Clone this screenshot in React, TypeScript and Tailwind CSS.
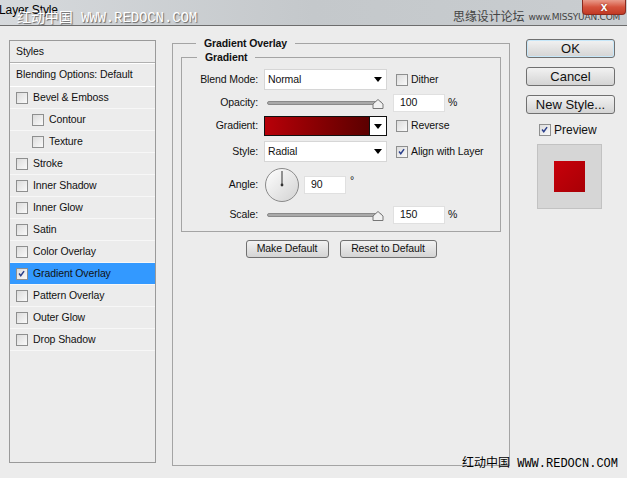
import React from 'react';

const styleItems: { label: string; sub?: boolean; checked?: boolean; active?: boolean }[] = [
  { label: 'Bevel & Emboss' },
  { label: 'Contour', sub: true },
  { label: 'Texture', sub: true },
  { label: 'Stroke' },
  { label: 'Inner Shadow' },
  { label: 'Inner Glow' },
  { label: 'Satin' },
  { label: 'Color Overlay' },
  { label: 'Gradient Overlay', checked: true, active: true },
  { label: 'Pattern Overlay' },
  { label: 'Outer Glow' },
  { label: 'Drop Shadow' },
];

const Check: React.FC<{ checked?: boolean }> = ({ checked }) => (
  <span className="relative inline-block w-[12px] h-[12px] shrink-0 border border-[#8e8f8f] bg-gradient-to-br from-[#dcdcdc] to-[#fafafa]">
    {checked && (
      <svg viewBox="0 0 12 12" className="absolute left-0 top-0 w-[10px] h-[10px]">
        <path d="M2.5 5.5 L4.5 8 L8.5 2.5" fill="none" stroke="#2a3f8c" strokeWidth="1.8" />
      </svg>
    )}
  </span>
);

const Arrow = () => (
  <svg viewBox="0 0 8 5" className="w-[8px] h-[5px]">
    <path d="M0 0 H8 L4 5 Z" fill="#000" />
  </svg>
);

const Select: React.FC<{ value: string }> = ({ value }) => (
  <div className="flex items-center justify-between w-[123px] h-[21px] bg-white border border-[#d6d6d6] pl-[3px] pr-[4px]">
    <span>{value}</span>
    <Arrow />
  </div>
);

const Slider = () => (
  <div className="relative w-[120px] h-[12px] flex items-center">
    <div className="w-[115px] h-[4px] rounded-full bg-[#a9a9a9] border border-[#8a8a8a] ml-[3px]" />
    <svg viewBox="0 0 12 10" className="absolute right-[0px] top-[2px] w-[12px] h-[10px]">
      <path d="M1 9.5 V5 L6 0.5 L11 5 V9.5 Z" fill="#f1f1f1" stroke="#777" strokeWidth="1" />
    </svg>
  </div>
);

const Field: React.FC<{ value: string; w?: string }> = ({ value, w = 'w-[52px]' }) => (
  <div className={`${w} h-[18px] bg-white border border-[#e0e0e0] pl-[6px] flex items-center`}>{value}</div>
);

const Btn: React.FC<{ children: React.ReactNode; className?: string }> = ({ children, className = '' }) => (
  <div
    className={`flex items-center justify-center h-[18px] rounded-[3px] border border-[#707070] bg-gradient-to-b from-[#f2f2f2] to-[#d4d4d4] ${className}`}
  >
    {children}
  </div>
);

const Label: React.FC<{ children: React.ReactNode }> = ({ children }) => (
  <span className="w-[76px] mr-[6px] text-right shrink-0">{children}</span>
);

export default function App() {
  return (
    <div
      className="relative w-[627px] h-[478px] bg-[#ececec] text-[10.5px] tracking-[-0.1px] text-[#111] overflow-hidden"
      style={{ fontFamily: '"Liberation Sans", "Noto Sans CJK SC", sans-serif' }}
    >
      {/* title bar */}
      <div className="h-[26px] border-b border-[#6d6d6d] bg-gradient-to-r from-[#d6d9dc] via-[#c4c8cb] to-[#c9cdd0] flex items-start">
        <span className="text-[12px] mt-[1px] -ml-[1px] text-black">Layer Style</span>
      </div>
      <div className="absolute left-[17px] top-[11px] text-[14px] leading-[14px] text-white [text-shadow:1px_1px_1px_#666] whitespace-nowrap"
        style={{ fontFamily: '"Liberation Mono", "Noto Sans CJK SC", monospace' }}>
        红动中国 WWW.REDOCN.COM
      </div>
      <div className="absolute left-[453px] top-[9px] flex items-end gap-[4px] text-[#444] whitespace-nowrap">
        <span className="text-[12px] leading-[14px]" style={{ fontFamily: '"Noto Sans CJK SC", sans-serif' }}>思缘设计论坛</span>
        <span className="text-[9px] leading-[10px] mb-[1px] tracking-[-0.2px]" style={{ fontFamily: '"DejaVu Sans", sans-serif' }}>www.MISSYUAN.COM</span>
      </div>
      <div className="absolute left-[582px] top-0 w-[44px] h-[15px] rounded-b-[4px] border border-[#8a2a1e] border-t-0 bg-gradient-to-b from-[#e89a8a] via-[#d5533d] to-[#c23a24] flex items-center justify-center text-white font-bold text-[12px] leading-[12px] [text-shadow:0_0_2px_#7a1a10]">
        x
      </div>

      <div className="flex">
        {/* styles list */}
        <div className="ml-[9px] mt-[14px] w-[147px] h-[423px] border border-[#9a9a9a]">
          <div className="h-[22px] flex items-center pl-[6px] border-b border-[#b0b0b0]">Styles</div>
          <div className="h-[24px] flex items-center pl-[6px] border-t border-white border-b border-[#c8c8c8]">Blending Options: Default</div>
          {styleItems.map((it) => (
            <div
              key={it.label}
              className={`h-[22px] flex items-center gap-[5px] border-b border-[#f7f7f7] ${it.sub ? 'pl-[22px]' : 'pl-[6px]'} ${it.active ? 'bg-[#3399ff]' : ''}`}
            >
              <Check checked={it.checked} />
              <span>{it.label}</span>
            </div>
          ))}
        </div>

        {/* main group */}
        <fieldset className="ml-[16px] mt-[11px] w-[338px] h-[429px] border border-[#a4a4a4] px-[8px]">
          <legend className="ml-[15px] px-[8px] font-bold leading-[13px]">Gradient Overlay</legend>
          <fieldset className="mt-[1px] h-[181px] border border-[#a4a4a4]">
            <legend className="ml-[15px] px-[8px] font-bold leading-[13px]">Gradient</legend>
            <div className="flex flex-col pt-[5px]">
              <div className="flex items-center h-[21px]">
                <Label>Blend Mode:</Label>
                <Select value="Normal" />
                <label className="ml-[9px] flex items-center gap-[3px]"><Check /> Dither</label>
              </div>

              <div className="flex items-center h-[18px] mt-[4px]">
                <Label>Opacity:</Label>
                <Slider />
                <div className="ml-[9px]"><Field value="100" /></div>
                <span className="ml-[3px]">%</span>
              </div>

              <div className="flex items-center h-[20px] mt-[4px]">
                <Label>Gradient:</Label>
                <div className="flex w-[123px] h-[20px] border border-[#111]">
                  <div className="flex-1 bg-gradient-to-r from-[#b80009] to-[#5c0000]" />
                  <div className="w-[17px] border-l border-[#111] bg-white flex items-center justify-center"><Arrow /></div>
                </div>
                <label className="ml-[9px] flex items-center gap-[3px]"><Check /> Reverse</label>
              </div>

              <div className="flex items-center h-[21px] mt-[5px]">
                <Label>Style:</Label>
                <Select value="Radial" />
                <label className="ml-[9px] flex items-center gap-[3px]"><Check checked /> Align with Layer</label>
              </div>

              <div className="flex items-center h-[36px] mt-[5px]">
                <Label>Angle:</Label>
                <svg viewBox="0 0 36 36" className="w-[36px] h-[36px]">
                  <defs>
                    <linearGradient id="dial" x1="0" y1="0" x2="1" y2="1">
                      <stop offset="0" stopColor="#ffffff" />
                      <stop offset="1" stopColor="#d2d2d2" />
                    </linearGradient>
                  </defs>
                  <circle cx="18" cy="18" r="16.5" fill="url(#dial)" stroke="#8a8a8a" />
                  <line x1="18" y1="18" x2="18" y2="4" stroke="#333" strokeWidth="1" />
                  <circle cx="18" cy="18" r="1.4" fill="#333" />
                </svg>
                <div className="ml-[4px] -mt-[1px]"><Field value="90" w="w-[42px]" /></div>
                <span className="ml-[4px] -mt-[8px]">°</span>
              </div>

              <div className="flex items-center h-[18px] mt-[3px]">
                <Label>Scale:</Label>
                <Slider />
                <div className="ml-[9px]"><Field value="150" /></div>
                <span className="ml-[3px]">%</span>
              </div>
            </div>
          </fieldset>
          <div className="flex justify-center gap-[11px] mt-[8px]">
            <Btn className="w-[83px]">Make Default</Btn>
            <Btn className="w-[97px]">Reset to Default</Btn>
          </div>
        </fieldset>

        {/* right column */}
        <div className="ml-[16px] mt-[13px] w-[89px] flex flex-col text-[13px] tracking-normal">
          <Btn className="h-[19px] border-[#3c7fb1] bg-gradient-to-b from-[#eaf6fd] to-[#a7d9f5] shadow-[inset_0_0_0_1px_#c6e7f9]">OK</Btn>
          <Btn className="mt-[9px] h-[19px]">Cancel</Btn>
          <Btn className="mt-[9px] h-[19px]">New Style...</Btn>
          <label className="mt-[7px] ml-[13px] flex items-center gap-[3px] text-[12px]"><Check checked /> Preview</label>
          <div className="mt-[5px] ml-[11px] w-[65px] h-[65px] border border-[#c2c2c2] bg-[#d6d6d6] flex items-center justify-center">
            <div className="w-[31px] h-[31px] bg-gradient-to-br from-[#c8000a] to-[#a80006]" />
          </div>
        </div>
      </div>

      <div className="absolute left-[462px] top-[455px] text-[12px] text-black whitespace-nowrap tracking-normal"
        style={{ fontFamily: '"Liberation Mono", "Noto Sans CJK SC", monospace' }}>
        红动中国 WWW.REDOCN.COM
      </div>
    </div>
  );
}
